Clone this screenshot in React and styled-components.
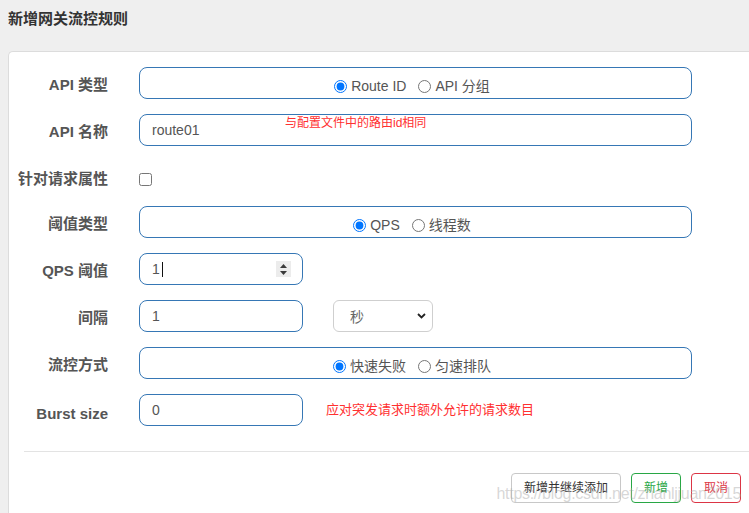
import React from "react";
import styled, { createGlobalStyle } from "styled-components";

const GlobalStyle = createGlobalStyle`
  html, body {
    margin: 0;
    padding: 0;
    background: #efefef;
    font-family: "Liberation Sans", "Noto Sans CJK SC", sans-serif;
    overflow: hidden;
  }
  * { box-sizing: border-box; }
`;

const Page = styled.div`
  position: relative;
  width: 749px;
  height: 513px;
  overflow: hidden;
  padding-left: 8px;
`;

const Title = styled.h4`
  margin: 0;
  height: 51px;
  padding-top: 9px;
  font-size: 15px;
  line-height: 20px;
  font-weight: bold;
  color: #333;
`;

const Card = styled.div`
  margin-right: -20px;
  background: #fff;
  border: 1px solid #dcdcdc;
  border-right: none;
  border-bottom: none;
  border-radius: 5px 0 0 0;
  padding: 15px 0 30px 0;
`;

const Form = styled.div`
  display: flex;
  flex-direction: column;
  gap: 15px;
`;

const Row = styled.div`
  display: flex;
  align-items: ${(p) => (p.$center ? "center" : "flex-start")};
  min-height: ${(p) => p.$h || 32}px;
`;

const Label = styled.label`
  flex: none;
  width: 99px;
  margin-right: 31px;
  padding-top: 8px;
  text-align: right;
  font-size: 15px;
  line-height: 20px;
  font-weight: bold;
  color: #555;
  white-space: nowrap;
`;

const Field = styled.div`
  position: relative;
  flex: none;
  width: ${(p) => p.$w}px;
  height: 32px;
  border: 1px solid #3677b5;
  border-radius: 8px;
  padding: 0 12px;
  display: flex;
  align-items: center;
  font-size: 14px;
  color: #555;
`;

const ChoiceField = styled(Field)`
  justify-content: center;
  align-items: flex-start;
  padding: 8px 19px 0 12px;
  gap: 12px;
`;

const Option = styled.label`
  display: flex;
  align-items: center;
  gap: 4px;
  font-size: 14px;
  line-height: 20px;
  color: #555;
  white-space: nowrap;
`;

const Radio = styled.input.attrs({ type: "radio" })`
  margin: 0;
  width: 13px;
  height: 13px;
`;

const Check = styled.input.attrs({ type: "checkbox" })`
  margin: 12px 0 0 0;
  width: 13px;
  height: 13px;
`;

const Value = styled.span`
  line-height: 20px;
`;

const Caret = styled.span`
  display: inline-block;
  width: 1px;
  height: 15px;
  margin-left: 2px;
  background: #111;
`;

const Spinner = styled.span`
  position: absolute;
  right: 11px;
  top: 7px;
  width: 15px;
  height: 16px;
  background: #ececec;
  display: flex;
  align-items: center;
  justify-content: center;
`;

const Select = styled.div`
  flex: none;
  width: 100px;
  height: 32px;
  margin-left: 30px;
  border: 1px solid #cfcfcf;
  border-radius: 6px;
  padding: 0 6px 0 16px;
  display: flex;
  align-items: center;
  justify-content: space-between;
  font-size: 14px;
  color: #666;
`;

const Note = styled.span`
  font-size: 13px;
  line-height: 16px;
  color: #ff3030;
  white-space: nowrap;
  margin-left: 23px;
`;

const FloatNote = styled.span`
  position: absolute;
  left: 145px;
  top: 1px;
  font-size: 12px;
  line-height: 15px;
  color: #ff3030;
  white-space: nowrap;
`;

const Divider = styled.div`
  margin: 25px 0 0 15px;
  height: 1px;
  background: #e3e3e3;
`;

const Footer = styled.div`
  display: flex;
  justify-content: flex-end;
  gap: 10px;
  padding: 21px 28px 0 0;
`;

const tones = {
  plain: { c: "#333", b: "#c8c8c8" },
  ok: { c: "#28a745", b: "#28a745" },
  danger: { c: "#dc3545", b: "#dc3545" },
};

const Button = styled.button`
  height: 30px;
  padding: 0 12px;
  background: #fff;
  border: 1px solid ${(p) => tones[p.$tone].b};
  border-radius: 4px;
  color: ${(p) => tones[p.$tone].c};
  font-family: inherit;
  font-size: 12px;
  line-height: 16px;
`;

const Watermark = styled.div`
  position: absolute;
  right: 8px;
  top: 484px;
  font-size: 16px;
  line-height: 20px;
  letter-spacing: -0.3px;
  color: rgba(175, 175, 175, 0.5);
  pointer-events: none;
  white-space: nowrap;
`;

const Chevron = () => (
  <svg width="9" height="6" viewBox="0 0 9 6">
    <polyline points="1,1 4.5,4.5 8,1" fill="none" stroke="#222" strokeWidth="1.8" />
  </svg>
);

const Arrows = () => (
  <svg width="7" height="11" viewBox="0 0 7 11">
    <polygon points="0,4 3.5,0 7,4" fill="#3a3a3a" />
    <polygon points="0,7 3.5,11 7,7" fill="#3a3a3a" />
  </svg>
);

function RadioChoice({ name, options }) {
  return (
    <ChoiceField $w={553}>
      {options.map((o, i) => (
        <Option key={o}>
          <Radio name={name} defaultChecked={i === 0} />
          {o}
        </Option>
      ))}
    </ChoiceField>
  );
}

export default function App() {
  return (
    <Page>
      <GlobalStyle />
      <Title>新增网关流控规则</Title>
      <Card>
        <Form>
          <Row>
            <Label>API 类型</Label>
            <RadioChoice name="apiType" options={["Route ID", "API 分组"]} />
          </Row>
          <Row>
            <Label>API 名称</Label>
            <Field $w={553}>
              <Value>route01</Value>
              <FloatNote>与配置文件中的路由id相同</FloatNote>
            </Field>
          </Row>
          <Row $h={30}>
            <Label>针对请求属性</Label>
            <Check />
          </Row>
          <Row>
            <Label>阈值类型</Label>
            <RadioChoice name="grade" options={["QPS", "线程数"]} />
          </Row>
          <Row>
            <Label>QPS 阈值</Label>
            <Field $w={164}>
              <Value>1</Value>
              <Caret />
              <Spinner>
                <Arrows />
              </Spinner>
            </Field>
          </Row>
          <Row>
            <Label>间隔</Label>
            <Field $w={164}>
              <Value>1</Value>
            </Field>
            <Select>
              <span>秒</span>
              <Chevron />
            </Select>
          </Row>
          <Row>
            <Label>流控方式</Label>
            <RadioChoice name="behavior" options={["快速失败", "匀速排队"]} />
          </Row>
          <Row $center>
            <Label>Burst size</Label>
            <Field $w={164}>
              <Value>0</Value>
            </Field>
            <Note>应对突发请求时额外允许的请求数目</Note>
          </Row>
        </Form>
        <Divider />
        <Footer>
          <Button $tone="plain">新增并继续添加</Button>
          <Button $tone="ok">新增</Button>
          <Button $tone="danger">取消</Button>
        </Footer>
      </Card>
      <Watermark>https://blog.csdn.net/zhanljjuan2015</Watermark>
    </Page>
  );
}
